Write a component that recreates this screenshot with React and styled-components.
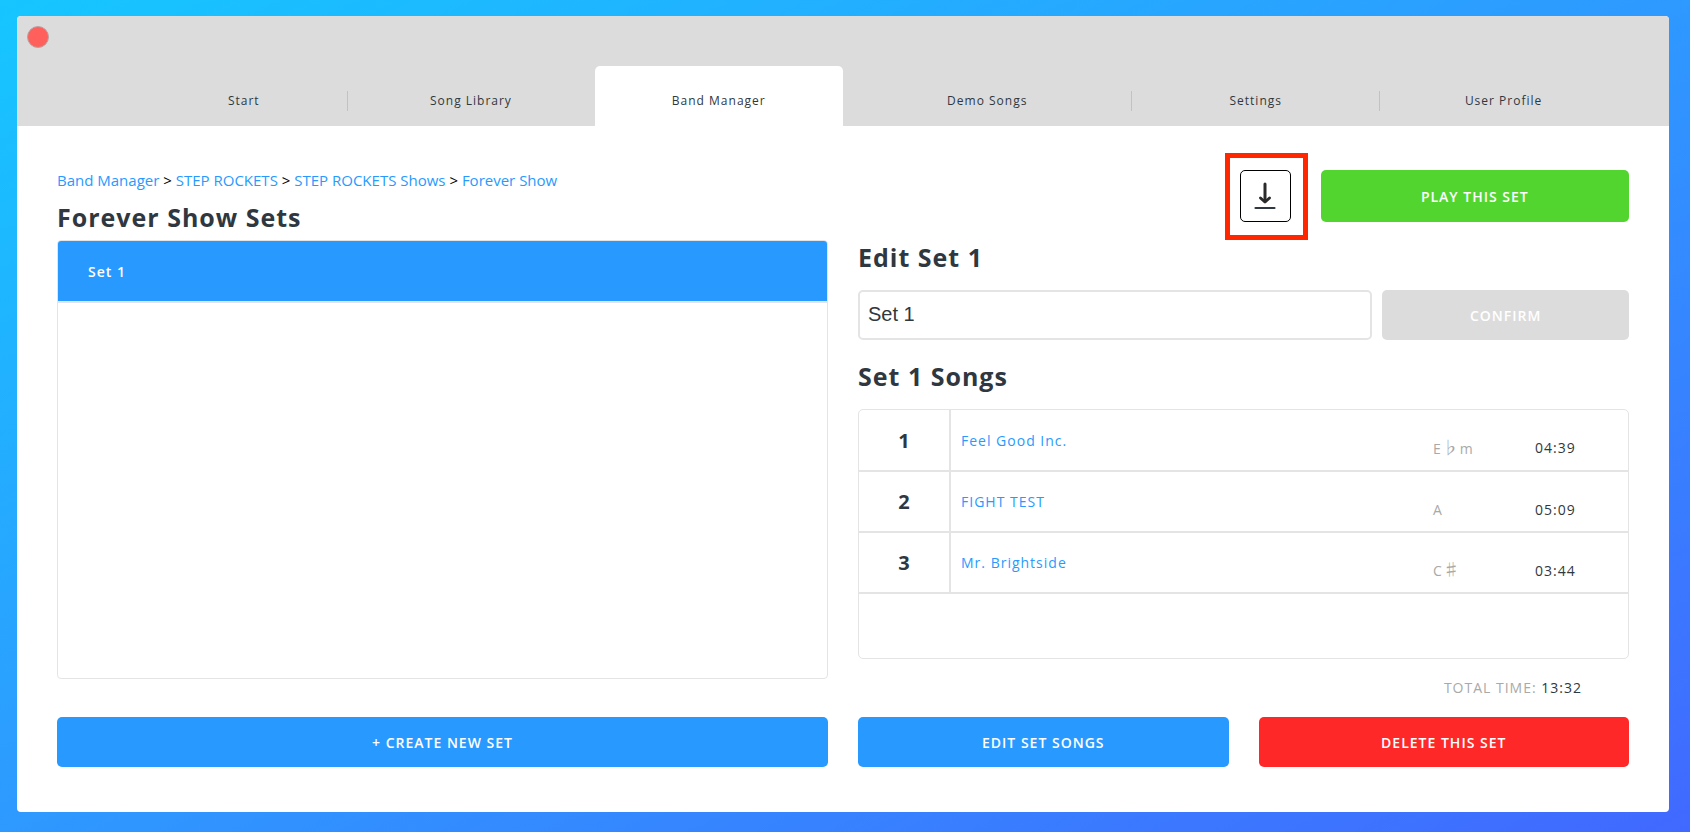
import { useState } from "react";
import styled, { createGlobalStyle } from "styled-components";

const blue = "#289aff";
const dark = "#2f3840";
const line = "#e4e4e4";

const GlobalStyle = createGlobalStyle`
  * {
    box-sizing: border-box;
  }
  body {
    margin: 0;
    font-family: "Open Sans", "Noto Sans", sans-serif;
    font-size: 14px;
    color: ${dark};
  }
`;

const Page = styled.div`
  display: flex;
  min-height: 100vh;
  padding: 16px 21px 20px 17px;
  background: linear-gradient(to bottom right, #16c6ff, #2e99ff 50%, #4169ff);
`;

const Window = styled.div`
  flex: 1;
  display: flex;
  flex-direction: column;
  border-radius: 4px;
  overflow: hidden;
  background-color: white;
`;

const TitleBar = styled.header`
  display: flex;
  flex-direction: column;
  justify-content: space-between;
  height: 110px;
  background-color: #dcdcdc;
`;

const CloseButton = styled.button`
  width: 22px;
  height: 22px;
  margin: 10px;
  padding: 0;
  border: 1px solid #b9a3a2;
  border-radius: 50%;
  background-color: #ff605c;
  cursor: pointer;
`;

const Tabs = styled.nav`
  display: grid;
  grid-template-columns: 5fr 6fr 6fr 7fr 6fr 6fr;
  padding: 0 41px 0 124px;
`;

const Tab = styled.a`
  display: flex;
  align-items: center;
  height: 60px;
  padding-top: 10px;
  border-radius: 5px 5px 0 0;
  background-color: ${({ $active }) => ($active ? "white" : "transparent")};
  color: ${dark};
  font-size: 12px;
  letter-spacing: 1px;
  text-decoration: none;
`;

const TabLabel = styled.span`
  flex: 1;
  line-height: 20px;
  text-align: center;
  border-right: 1px solid ${({ $divider }) => ($divider ? "#c2c2c2" : "transparent")};
`;

const Content = styled.main`
  flex: 1;
  display: grid;
  grid-template-columns: 1fr 1fr;
  column-gap: 30px;
  padding: 44px 40px 45px;
`;

const Column = styled.section`
  display: flex;
  flex-direction: column;
  min-width: 0;
`;

const Breadcrumbs = styled.nav`
  color: black;
  font-size: 15px;
  line-height: 20px;
`;

const Crumb = styled.a`
  color: ${blue};
  text-decoration: none;
`;

const Heading = styled.h2`
  margin: 0;
  font-size: 25px;
  line-height: 34px;
  letter-spacing: 1px;
`;

const SetsHeading = styled(Heading)`
  margin: 10px 0 6px;
`;

const EditHeading = styled(Heading)`
  margin: 18px 0 16px;
`;

const SongsHeading = styled(Heading)`
  margin: 19px 0 16px;
`;

const SetList = styled.ul`
  flex: 1;
  margin: 0 0 38px;
  padding: 0;
  list-style: none;
  border: 1px solid ${line};
  border-radius: 4px;
  overflow: hidden;
`;

const SetItem = styled.li`
  border-bottom: 2px solid ${line};
`;

const SetButton = styled.button`
  display: block;
  width: 100%;
  height: 60px;
  padding: 0 30px;
  border: none;
  background-color: ${blue};
  color: white;
  font-family: inherit;
  font-size: 14px;
  font-weight: 600;
  letter-spacing: 1px;
  text-align: left;
  cursor: pointer;
`;

const Button = styled.button`
  height: 50px;
  border: none;
  border-radius: 5px;
  background-color: ${({ $color }) => $color};
  color: white;
  font-family: inherit;
  font-size: 14px;
  font-weight: 600;
  letter-spacing: 1px;
  cursor: pointer;
`;

const PlayButton = styled(Button)`
  width: 40%;
  height: 52px;
`;

const ConfirmButton = styled(Button)`
  width: 32%;
`;

const Actions = styled.div`
  display: flex;
  justify-content: flex-end;
  gap: 30px;
`;

const DownloadButton = styled.button`
  position: relative;
  display: flex;
  align-items: center;
  justify-content: center;
  width: 51px;
  height: 52px;
  padding: 0;
  border: 1px solid black;
  border-radius: 5px;
  background-color: white;
  cursor: pointer;
`;

const Highlight = styled.span`
  position: absolute;
  inset: -18px -18px -19px -16px;
  border: 5px solid #ff2600;
  pointer-events: none;
`;

const EditForm = styled.form`
  display: flex;
  gap: 10px;
`;

const NameInput = styled.input`
  flex: 1;
  min-width: 0;
  height: 50px;
  padding: 0 8px 2px;
  border: 2px solid ${line};
  border-radius: 5px;
  color: ${dark};
  font-family: "Liberation Sans", Arial, sans-serif;
  font-size: 20px;
`;

const SongPanel = styled.div`
  height: 250px;
  border: 1px solid ${line};
  border-radius: 5px;
  overflow: auto;
`;

const SongTable = styled.table`
  width: 100%;
  border-collapse: collapse;
  table-layout: fixed;
`;

const SongRow = styled.tr`
  height: 61px;
  border-bottom: 2px solid ${line};
`;

const Position = styled.th`
  width: 91px;
  padding: 0;
  border-right: 2px solid ${line};
  font-size: 20px;
`;

const SongName = styled.td`
  padding: 0 10px;
`;

const SongLink = styled.a`
  color: ${blue};
  letter-spacing: 1px;
  text-decoration: none;
`;

const SongKey = styled.td`
  width: 102px;
  padding: 16px 0 0;
  color: #a9a9a9;
  line-height: 20px;
  letter-spacing: 1px;
`;

const Accidental = styled.span`
  font-family: "Noto Sans CJK JP", sans-serif;
  font-size: 17px;
  line-height: 1;
`;

const SongTime = styled.td`
  width: 93px;
  padding: 16px 0 0;
  line-height: 20px;
  letter-spacing: 1px;
`;

const TotalTime = styled.p`
  margin: 18px 47px 0 0;
  line-height: 22px;
  letter-spacing: 1px;
  text-align: right;
`;

const Muted = styled.span`
  color: #a9a9a9;
`;

const FooterActions = styled.div`
  display: grid;
  grid-template-columns: 1fr 1fr;
  gap: 30px;
  margin-top: auto;
`;

const tabs = [
  { label: "Start", divider: true },
  { label: "Song Library" },
  { label: "Band Manager", active: true },
  { label: "Demo Songs", divider: true },
  { label: "Settings", divider: true },
  { label: "User Profile" },
];

const songs = [
  { name: "Feel Good Inc.", note: "E", accidental: "♭", mode: "m", time: "04:39" },
  { name: "FIGHT TEST", note: "A", time: "05:09" },
  { name: "Mr. Brightside", note: "C", accidental: "♯", time: "03:44" },
];

const DownloadIcon = () => (
  <svg width="24" height="30" viewBox="0 0 24 30" fill="none" strokeLinecap="round" aria-hidden="true">
    <path d="M12 3v17" stroke="#2a2a2a" strokeWidth="3" />
    <path d="M7.500 17l4.500 4 4.500-4" stroke="#2a2a2a" strokeWidth="3" strokeLinejoin="round" />
    <path d="M2.500 27h19" stroke={dark} strokeWidth="2.200" />
  </svg>
);

const App = () => {
  const [name, setName] = useState("Set 1");

  return (
    <Page>
      <GlobalStyle />
      <Window>
        <TitleBar>
          <CloseButton aria-label="Close" />
          <Tabs>
            {tabs.map((tab) => (
              <Tab key={tab.label} href="#" $active={tab.active}>
                <TabLabel $divider={tab.divider}>{tab.label}</TabLabel>
              </Tab>
            ))}
          </Tabs>
        </TitleBar>
        <Content>
          <Column>
            <Breadcrumbs>
              <Crumb href="#">Band Manager</Crumb> &gt; <Crumb href="#">STEP ROCKETS</Crumb> &gt;{" "}
              <Crumb href="#">STEP ROCKETS Shows</Crumb> &gt; <Crumb href="#">Forever Show</Crumb>
            </Breadcrumbs>
            <SetsHeading>Forever Show Sets</SetsHeading>
            <SetList>
              <SetItem>
                <SetButton>Set 1</SetButton>
              </SetItem>
            </SetList>
            <Button $color={blue}>+ CREATE NEW SET</Button>
          </Column>
          <Column>
            <Actions>
              <DownloadButton aria-label="Download">
                <DownloadIcon />
                <Highlight />
              </DownloadButton>
              <PlayButton $color="#53d530">PLAY THIS SET</PlayButton>
            </Actions>
            <EditHeading>Edit Set 1</EditHeading>
            <EditForm onSubmit={(e) => e.preventDefault()}>
              <NameInput aria-label="Set name" value={name} onChange={(e) => setName(e.target.value)} />
              <ConfirmButton $color="#dcdcdc">CONFIRM</ConfirmButton>
            </EditForm>
            <SongsHeading>Set 1 Songs</SongsHeading>
            <SongPanel>
              <SongTable>
                <tbody>
                  {songs.map((song, i) => (
                    <SongRow key={song.name}>
                      <Position scope="row">{i + 1}</Position>
                      <SongName>
                        <SongLink href="#">{song.name}</SongLink>
                      </SongName>
                      <SongKey>
                        {song.note}
                        {song.accidental && <Accidental>{song.accidental}</Accidental>}
                        {song.mode}
                      </SongKey>
                      <SongTime>{song.time}</SongTime>
                    </SongRow>
                  ))}
                </tbody>
              </SongTable>
            </SongPanel>
            <TotalTime>
              <Muted>TOTAL TIME:</Muted> 13:32
            </TotalTime>
            <FooterActions>
              <Button $color={blue}>EDIT SET SONGS</Button>
              <Button $color="#ff2828">DELETE THIS SET</Button>
            </FooterActions>
          </Column>
        </Content>
      </Window>
    </Page>
  );
};

export default App;
